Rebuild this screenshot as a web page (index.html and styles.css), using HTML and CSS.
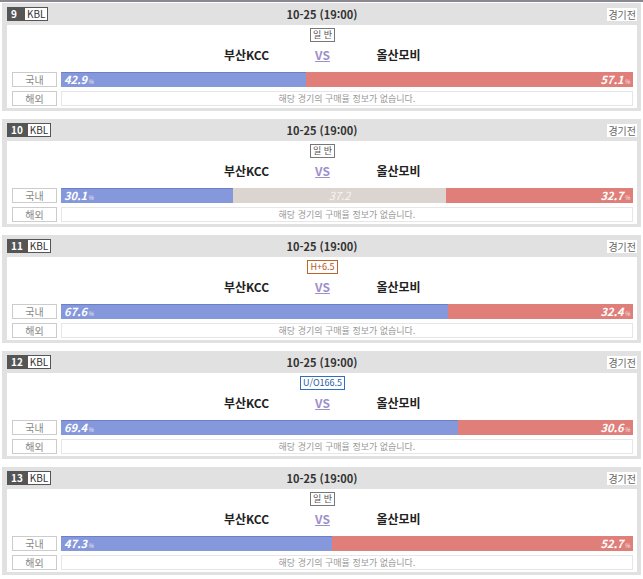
FILE: index.html
```html
<!DOCTYPE html>
<html lang="ko">
<head>
    <meta charset="UTF-8">
    <title>KBL 구매율</title>
    <link rel="stylesheet" href="styles.css">
</head>
<body>
    <div class="list">

        <!-- 9 -->
        <div class="match">
            <div class="match-head">
                <div class="league"><span class="num">9</span><span class="lg">KBL</span></div>
                <div class="date">10-25 (19:00)</div>
                <div class="state"><span>경기전</span></div>
            </div>
            <div class="match-body">
                <div class="tag-row"><span class="tag">일 반</span></div>
                <div class="teams">
                    <div class="team">부산KCC</div>
                    <div class="vs">VS</div>
                    <div class="team">올산모비</div>
                </div>
                <div class="rate-row">
                    <div class="rate-label">국내</div>
                    <div class="bar">
                        <div class="bar-home" style="width: 42.9%">42.9<small>%</small></div>
                        <div class="bar-away">57.1<small>%</small></div>
                    </div>
                </div>
                <div class="rate-row">
                    <div class="rate-label">해외</div>
                    <div class="no-info">해당 경기의 구매율 정보가 없습니다.</div>
                </div>
            </div>
        </div>

        <!-- 10 -->
        <div class="match">
            <div class="match-head">
                <div class="league"><span class="num">10</span><span class="lg">KBL</span></div>
                <div class="date">10-25 (19:00)</div>
                <div class="state"><span>경기전</span></div>
            </div>
            <div class="match-body">
                <div class="tag-row"><span class="tag">일 반</span></div>
                <div class="teams">
                    <div class="team">부산KCC</div>
                    <div class="vs">VS</div>
                    <div class="team">올산모비</div>
                </div>
                <div class="rate-row">
                    <div class="rate-label">국내</div>
                    <div class="bar">
                        <div class="bar-home" style="width: 30.1%">30.1<small>%</small></div>
                        <div class="bar-draw" style="width: 37.2%">37.2</div>
                        <div class="bar-away">32.7<small>%</small></div>
                    </div>
                </div>
                <div class="rate-row">
                    <div class="rate-label">해외</div>
                    <div class="no-info">해당 경기의 구매율 정보가 없습니다.</div>
                </div>
            </div>
        </div>

        <!-- 11 -->
        <div class="match">
            <div class="match-head">
                <div class="league"><span class="num">11</span><span class="lg">KBL</span></div>
                <div class="date">10-25 (19:00)</div>
                <div class="state"><span>경기전</span></div>
            </div>
            <div class="match-body">
                <div class="tag-row"><span class="tag tag-handi">H+6.5</span></div>
                <div class="teams">
                    <div class="team">부산KCC</div>
                    <div class="vs">VS</div>
                    <div class="team">올산모비</div>
                </div>
                <div class="rate-row">
                    <div class="rate-label">국내</div>
                    <div class="bar">
                        <div class="bar-home" style="width: 67.6%">67.6<small>%</small></div>
                        <div class="bar-away">32.4<small>%</small></div>
                    </div>
                </div>
                <div class="rate-row">
                    <div class="rate-label">해외</div>
                    <div class="no-info">해당 경기의 구매율 정보가 없습니다.</div>
                </div>
            </div>
        </div>

        <!-- 12 -->
        <div class="match">
            <div class="match-head">
                <div class="league"><span class="num">12</span><span class="lg">KBL</span></div>
                <div class="date">10-25 (19:00)</div>
                <div class="state"><span>경기전</span></div>
            </div>
            <div class="match-body">
                <div class="tag-row"><span class="tag tag-uo">U/O166.5</span></div>
                <div class="teams">
                    <div class="team">부산KCC</div>
                    <div class="vs">VS</div>
                    <div class="team">올산모비</div>
                </div>
                <div class="rate-row">
                    <div class="rate-label">국내</div>
                    <div class="bar">
                        <div class="bar-home" style="width: 69.4%">69.4<small>%</small></div>
                        <div class="bar-away">30.6<small>%</small></div>
                    </div>
                </div>
                <div class="rate-row">
                    <div class="rate-label">해외</div>
                    <div class="no-info">해당 경기의 구매율 정보가 없습니다.</div>
                </div>
            </div>
        </div>

        <!-- 13 -->
        <div class="match">
            <div class="match-head">
                <div class="league"><span class="num">13</span><span class="lg">KBL</span></div>
                <div class="date">10-25 (19:00)</div>
                <div class="state"><span>경기전</span></div>
            </div>
            <div class="match-body">
                <div class="tag-row"><span class="tag">일 반</span></div>
                <div class="teams">
                    <div class="team">부산KCC</div>
                    <div class="vs">VS</div>
                    <div class="team">올산모비</div>
                </div>
                <div class="rate-row">
                    <div class="rate-label">국내</div>
                    <div class="bar">
                        <div class="bar-home" style="width: 47.3%">47.3<small>%</small></div>
                        <div class="bar-away">52.7<small>%</small></div>
                    </div>
                </div>
                <div class="rate-row">
                    <div class="rate-label">해외</div>
                    <div class="no-info">해당 경기의 구매율 정보가 없습니다.</div>
                </div>
            </div>
        </div>

    </div>
</body>
</html>
```

FILE: styles.css
```css
body {
    margin: 0;
    background-color: #fff;
    font-family: "Noto Sans CJK KR", "Noto Sans", sans-serif;
    color: #333;
    border-top: 2px solid #8b8892;
}
.list {
    padding: 1px 2px 0 2px;
}
.match {
    background-color: #e1e1e1;
    padding: 0 4px 3px 5px;
    margin-bottom: 8px;
}
.match-head {
    height: 22px;
    display: grid;
    grid-template-columns: 1fr auto 1fr;
    align-items: center;
}
.league {
    display: flex;
    height: 14px;
}
.num {
    background-color: #555;
    color: #fff;
    font-size: 10px;
    font-weight: bold;
    line-height: 14px;
    padding: 0 4px;
    min-width: 9px;
}
.lg {
    background-color: #fff;
    border: 1px solid #555;
    color: #333;
    font-size: 10px;
    line-height: 12px;
    padding: 0 2px;
}
.date {
    font-size: 11px;
    font-weight: bold;
    line-height: 14px;
    color: #333;
}
.state {
    display: flex;
    justify-content: flex-end;
}
.state span {
    background-color: #fff;
    color: #666;
    font-size: 10px;
    line-height: 13px;
    padding: 0 1px;
}
.match-body {
    background-color: #fff;
    padding: 3px 4px 2px 5px;
}
.tag-row {
    display: flex;
    justify-content: center;
    height: 15px;
}
.tag {
    font-size: 9px;
    line-height: 12px;
    height: 12px;
    padding: 0 2px;
    border: 1px solid #777;
    color: #555;
    background-color: #fff;
}
.tag-handi {
    border-color: #c0622a;
    color: #b65422;
}
.tag-uo {
    border-color: #2f6fbf;
    color: #2a5ea0;
}
.teams {
    display: flex;
    justify-content: center;
    align-items: center;
    height: 22px;
    margin-top: 1px;
}
.team {
    width: 118px;
    text-align: center;
    font-size: 12px;
    font-weight: bold;
    line-height: 16px;
    color: #222;
}
.vs {
    width: 34px;
    text-align: center;
    font-size: 12px;
    font-weight: bold;
    line-height: 16px;
    color: #9d8fcc;
    text-decoration: underline;
}
.rate-row {
    display: flex;
    gap: 4px;
    height: 15px;
    margin-top: 4px;
}
.teams + .rate-row {
    margin-top: 6px;
}
.rate-label {
    width: 45px;
    border: 1px solid #ccc;
    box-sizing: border-box;
    text-align: center;
    font-size: 10px;
    line-height: 13px;
    color: #888;
}
.bar {
    flex: 1;
    display: flex;
    font-size: 11px;
    font-weight: bold;
    font-style: italic;
    line-height: 15px;
    color: #fff;
}
.bar small {
    font-size: 6px;
    font-weight: normal;
    color: #eee;
    margin-left: 1px;
}
.bar-home {
    background-color: #8698dc;
    border-top: 1px solid #6c7fc8;
    box-sizing: border-box;
    line-height: 13px;
    padding-left: 3px;
}
.bar-draw {
    background-color: #dcd5cf;
    text-align: center;
    font-weight: normal;
    color: #f7f4f1;
}
.bar-away {
    flex: 1;
    background-color: #e07f7a;
    text-align: right;
    padding-right: 3px;
}
.no-info {
    flex: 1;
    border: 1px solid #e6e6e6;
    box-sizing: border-box;
    text-align: center;
    font-size: 9px;
    line-height: 13px;
    color: #999;
}
```
